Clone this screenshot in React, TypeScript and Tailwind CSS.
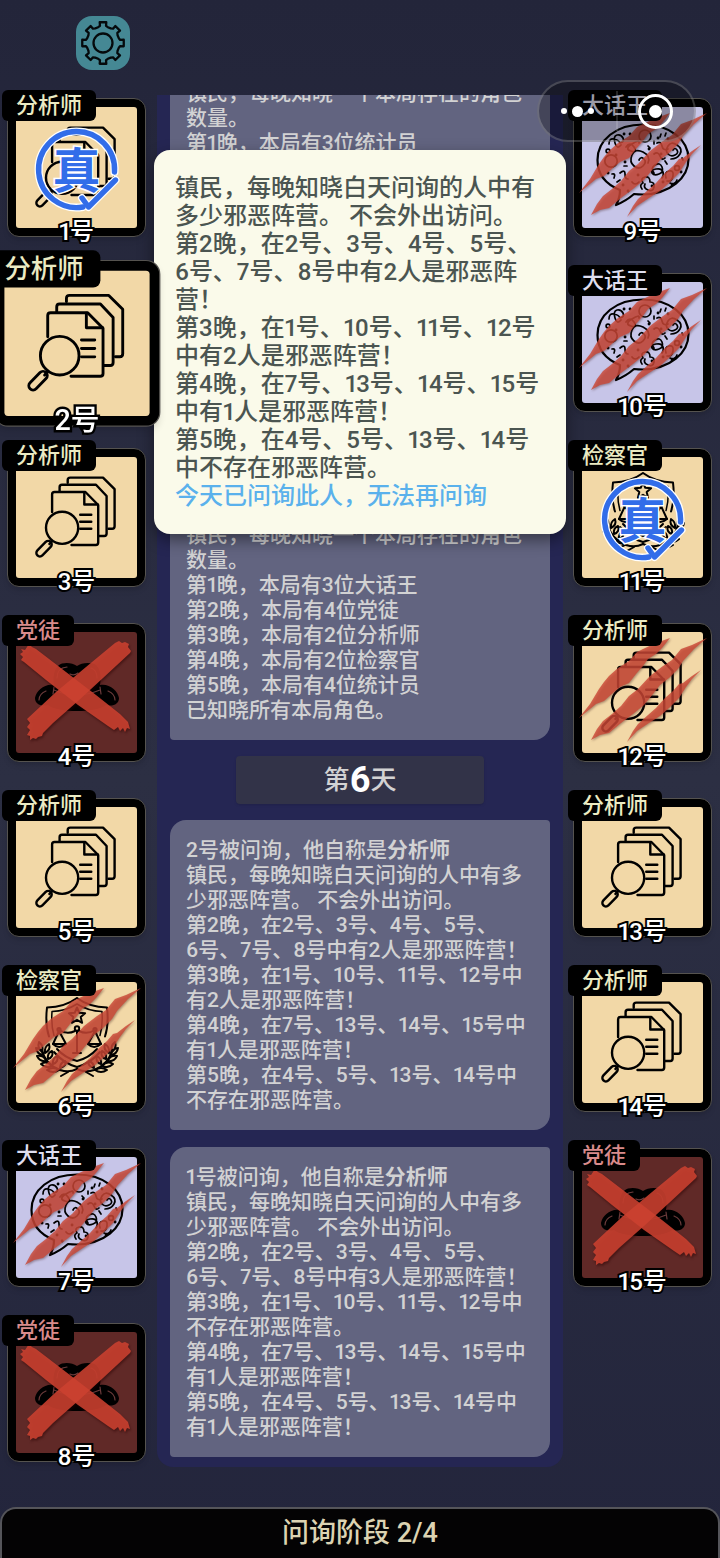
import type { ReactNode } from "react";

type Role = "analyst" | "cultist" | "prosecutor" | "liar";
type Mark = "true" | "claw" | "cross";

interface Player {
  no: number;
  role: Role;
  mark?: Mark;
  selected?: boolean;
}

const ROLES: Record<Role, { name: string; tile: string; text: string }> = {
  analyst: { name: "分析师", tile: "bg-[#f2d8a7]", text: "text-[#ebebc3]" },
  cultist: { name: "党徒", tile: "bg-[#602927]", text: "text-[#d98b8b]" },
  prosecutor: { name: "检察官", tile: "bg-[#f2d8a7]", text: "text-[#ebebc3]" },
  liar: { name: "大话王", tile: "bg-[#c7c5e8]", text: "text-[#dedeef]" },
};

const LEFT: Player[] = [
  { no: 1, role: "analyst", mark: "true" },
  { no: 2, role: "analyst", selected: true },
  { no: 3, role: "analyst" },
  { no: 4, role: "cultist", mark: "cross" },
  { no: 5, role: "analyst" },
  { no: 6, role: "prosecutor", mark: "claw" },
  { no: 7, role: "liar", mark: "claw" },
  { no: 8, role: "cultist", mark: "cross" },
];

const RIGHT: Player[] = [
  { no: 9, role: "liar", mark: "claw" },
  { no: 10, role: "liar", mark: "claw" },
  { no: 11, role: "prosecutor", mark: "true" },
  { no: 12, role: "analyst", mark: "claw" },
  { no: 13, role: "analyst" },
  { no: 14, role: "analyst" },
  { no: 15, role: "cultist", mark: "cross" },
];

function AnalystIcon() {
  return (
    <g fill="none" stroke="#000" strokeWidth="2.4" strokeLinecap="round" strokeLinejoin="round">
      <path d="M51.7 25.8V23q0-2.4 2.6-2.4H87l11.6 11.6v37q0 2.5-2.4 2.5h-3.7" />
      <path d="M43.6 34v-3.8q0-2.4 2.4-2.4h34L90.6 39v37.5q0 2.5-2.4 2.5h-4.9" />
      <path d="M36.1 55V37.4q0-2.4 2.4-2.4h30.9l12.8 13v37.6q0 2.4-2.4 2.4H55.5" />
      <path d="M68.3 35.5v12h13.5" />
      <path d="M64.2 57.8h11.1M64.2 64.8h11.1M64.2 71.8h11.1" />
      <circle cx="46.1" cy="70.8" r="16.1" />
      <path d="M35.5 84.5 33.5 87" />
      <path d="M29.7 84.9 21.4 93.4a3.5 3.5 0 0 0 5 5l8.3-8.5a3.5 3.5 0 0 0-5-5Z" />
    </g>
  );
}

function CultistIcon() {
  return (
    <g>
      <path
        d="M38 53C36 42 40 33 46 31.500 52 30 57 31.500 61 34 65 31.500 70 30 77 31.500 83 33 86 42 84 53 93 51 102 59 103 66 103 72 97 75 90 73 80 81 42 81 32 73 25 75 19 72 19 66 20 59 29 51 38 53Z"
        fill="#000"
      />
      <g fill="none" stroke="#6b3a3a" strokeWidth="1.2" strokeLinecap="round">
        <path d="M23 68q0-6 7-9M99 68q0-6-7-9" />
        <path d="M41 46q0-10 10-11M81 46q0-8-6-10M54 42q4 2 8-1" />
        <path d="M38 58q22 10 46 0M38 55l-1 7M84 55l1 7" />
      </g>
    </g>
  );
}

function Laurel() {
  return (
    <g>
      <path d="M26 68c2 9 8 16 18 20 6 2 11 2 17-1" />
      <path d="M26 70q-5-4-3-10 5 4 3 10ZM27 73q-6-1-7-7 7 1 7 7ZM29 71q-1-6 4-9 2 6-4 9Z" />
      <path d="M30 79q-6 1-9-5 7-1 9 5ZM32 77q-1-6 4-8 2 6-4 8ZM36 84q-6 3-11-2 6-4 11 2ZM37 82q-1-5 4-8 2 6-4 8Z" />
      <path d="M43 88q-6 4-12 0 6-4 12 0ZM44 86q0-5 5-7 2 5-5 7ZM52 90l-7 4" />
    </g>
  );
}

function ProsecutorIcon() {
  return (
    <g fill="none" stroke="#000" strokeWidth="2" strokeLinecap="round" strokeLinejoin="round">
      <path d="M61 16q-12 9-30 9.500q-2 17 2 29M61 16q12 9 30 9.500q2 17-2 29" />
      <path d="M61 22q-11 7-25 7.500q-1 14 2 24M61 22q11 7 25 7.500q1 14-2 24" strokeWidth="1.500" />
      <path d="m61 25.500 2.300 5.300 5.800.5-4.400 3.800 1.400 5.700-5.100-3-5.100 3 1.400-5.700-4.400-3.800 5.800-.5Z" />
      <circle cx="61" cy="46.500" r="2.200" />
      <path d="M61 49v22M57 71h8M59 49q-8 4-16-1M63 49q8 4 16-1" />
      <circle cx="43" cy="47.500" r="1.600" />
      <circle cx="79" cy="47.500" r="1.600" />
      <path d="m43 49-6 13h13l-7-13ZM79 49l-7 13h13l-6-13Z" />
      <path d="M37 62q6 6 13 0M72 62q6 6 13 0M41 67q8 9 20 12 12-3 20-12M38 70q9 11 23 15 14-4 23-15" />
      <Laurel />
      <g transform="matrix(-1 0 0 1 122 0)">
        <Laurel />
      </g>
    </g>
  );
}

function LiarIcon() {
  return (
    <g fill="none" stroke="#000" strokeWidth="1.700" strokeLinecap="round" strokeLinejoin="round">
      <path
        d="M38 83C23 77 15.500 66 15.500 53 15.500 33 34 17.500 61 17.500S106.500 33 106.500 52 88 87 61 87.500q-5 0-9-.5-8 7-18 11 4-7 4-15Z"
        strokeWidth="2.200"
      />
      <path d="M57 53q2-4 5-1t-1 7-9 0-2-11 11-3 5 11" />
      <path d="M91 43q2-3 4 0t-2 5-7-1 0-8 9-1 3 9-9 5" />
      <circle cx="63" cy="29" r="6" />
      <circle cx="29" cy="54" r="6.200" />
      <circle cx="26" cy="44" r="1.900" />
      <circle cx="95" cy="61" r="2.400" />
      <path d="M27 37q0-6 5-5t6 4q5-1 3-5t-6-3-2 8 6 2" />
      <path d="M44 40q4-6 8 0t-3 4 1-7 7-1M38 66q5-4 5 1t3 5M75 36q4-2 5 3t6 3M30 67q4-1 2 4" />
      <path d="M72 66q-4-5 1-8t7 2-3 7-7-1 4-4 7 3-1 6" />
      <path d="M60 82q-3-4 1-6-3-5 2-6t5 5q5 0 4 5t-6 3-3-6" />
      <path d="M84 71q-2-6 3-7t4 5-6 5M88 76q5 2 7-3M50 75q3 4 7 0M72 47q4-3 6 2t5 2" />
      <path d="m79 27-1 3M84 26l-1 3M66 39l2 2M72 34v3M35 75l3-2M42 59h3M100 51l1 2M83 54l2 3" />
      <g strokeWidth="2.800">
        <path d="M48 27h.1M42 27h.1M76 31h.1M34 48h.1M43 55h.1M26 66h.1M41 78h.1M56 68h.1M67 42h.1M79 47h.1M86 32h.1M70 79h.1M81 75h.1M90 78h.1M99 65h.1M46 84h.1" />
      </g>
    </g>
  );
}

const ICONS: Record<Role, () => ReactNode> = {
  analyst: AnalystIcon,
  cultist: CultistIcon,
  prosecutor: ProsecutorIcon,
  liar: LiarIcon,
};

function ClawMark() {
  return (
    <g fill="#cc4736" fillOpacity="0.8" className="drop-shadow-[1px_1px_1px_rgba(60,20,20,0.5)]">
      <path d="M-3 86 8 72 17 57 22 50 27 44 36 36 47 29 55 20 61 17 74 11 88 6 80 16 74 22 66 27 61 34 54 42 47 51 38 55 31 61 22 69 14 72Z" />
      <path d="M9 108 15 97 21 89 30 82 39 74 47 64 56 57 68 44 81 34 90 28 99 17 110 13 125 6 112 17 101 29 96 37 87 46 78 53 71 62 62 73 51 82 39 91 27 101 18 103Z" />
      <path d="M45 110 51 99 56 92 66 83 74 76 83 66 91 59 97 52 101 51 110 44 119 38 110 47 104 55 97 66 87 76 78 84 67 91 55 99Z" />
    </g>
  );
}

function CrossMark() {
  return (
    <g fill="#cc4130" fillOpacity="0.88" className="drop-shadow-[1px_2px_1px_rgba(40,0,0,0.5)]">
      <path d="M99 11 103 9 106 11 109 10 113 12 112 15 115 19 114 21 87 46 62 69 37 91 27 101 26 104 22 105 20 107 17 106 14 108 14 104 11 103 14 98 11 95 14 91 11 87 40 60 70 35Z" />
      <path d="M13 12 16 15 20 17 50 40 80 63 104 82 112 90 114 97 111 96 109 100 107 96 104 99 102 95 98 98 92 94 62 73 30 48 8 30 5 28 7 25 4 22 7 20 5 17 9 18Z" />
    </g>
  );
}

function TrueMark() {
  const ring = "M98.500 65A38 38 0 1 0 67 100";
  const tick = "m66 91 6.500 9L99.500 73";
  return (
    <g fill="none" strokeLinecap="round" strokeLinejoin="round">
      <path d={ring} stroke="#fff" strokeWidth="8" />
      <path d={tick} stroke="#fff" strokeWidth="8" />
      <path d={ring} stroke="#326de9" strokeWidth="5.400" />
      <path d={tick} stroke="#326de9" strokeWidth="5.400" />
    </g>
  );
}

function PlayerCard({ player }: { player: Player }) {
  const role = ROLES[player.role];
  const Icon = ICONS[player.role];
  return (
    <button
      type="button"
      className={`relative block w-36 pt-2 pl-[5px] text-left ${player.selected ? "z-20 scale-120" : ""}`}
    >
      <span className="relative block rounded-xl border border-[#55534f] bg-black p-2 shadow-md">
        <span className={`relative block aspect-square rounded-[3px] ${role.tile}`}>
          <svg viewBox="0 0 121 121" className="block size-full overflow-visible" aria-hidden="true">
            <Icon />
            {player.mark === "claw" && <ClawMark />}
            {player.mark === "cross" && <CrossMark />}
            {player.mark === "true" && <TrueMark />}
          </svg>
          {player.mark === "true" && (
            <span className="absolute inset-0 flex items-center justify-center pt-2 text-5xl leading-none font-bold text-[#326de9] [-webkit-text-stroke:3px_white] [paint-order:stroke_fill]">
              真
            </span>
          )}
        </span>
        <span className="absolute inset-x-0 -bottom-2 text-center text-2xl leading-6 font-medium text-white [-webkit-text-stroke:4px_black] [paint-order:stroke_fill]">
          {player.no}号
        </span>
      </span>
      <span
        className={`absolute top-0 left-0 rounded-md bg-black px-[14px] text-[22px] leading-[31px] font-medium whitespace-nowrap ${role.text}`}
      >
        {role.name}
      </span>
    </button>
  );
}

function LogCard({ lines, className = "" }: { lines: ReactNode[]; className?: string }) {
  return (
    <article
      className={`shrink-0 rounded-tl-2xl rounded-tr-sm rounded-br-2xl rounded-bl-sm bg-[#626480] px-4 pt-[18px] pb-[17px] text-[21px] leading-[25px] whitespace-nowrap text-[#d2d2d3] ${className}`}
    >
      {lines.map((line, i) => (
        <p key={i}>{line}</p>
      ))}
    </article>
  );
}

const RECORDS_A: ReactNode[] = [
  "镇民，每晚知晓一个本局存在的角色",
  "数量。",
  "第1晚，本局有3位统计员",
];

const RECORDS_B: ReactNode[] = [
  "镇民，每晚知晓一个本局存在的角色",
  "数量。",
  "第1晚，本局有3位大话王",
  "第2晚，本局有4位党徒",
  "第3晚，本局有2位分析师",
  "第4晚，本局有2位检察官",
  "第5晚，本局有4位统计员",
  "已知晓所有本局角色。",
];

const RECORDS_C: ReactNode[] = [
  <>2号被问询，他自称是<b>分析师</b></>,
  "镇民，每晚知晓白天问询的人中有多",
  "少邪恶阵营。 不会外出访问。",
  "第2晚，在2号、3号、4号、5号、",
  "6号、7号、8号中有2人是邪恶阵营！",
  "第3晚，在1号、10号、11号、12号中",
  "有2人是邪恶阵营！",
  "第4晚，在7号、13号、14号、15号中",
  "有1人是邪恶阵营！",
  "第5晚，在4号、5号、13号、14号中",
  "不存在邪恶阵营。",
];

const RECORDS_D: ReactNode[] = [
  <>1号被问询，他自称是<b>分析师</b></>,
  "镇民，每晚知晓白天问询的人中有多",
  "少邪恶阵营。 不会外出访问。",
  "第2晚，在2号、3号、4号、5号、",
  "6号、7号、8号中有3人是邪恶阵营！",
  "第3晚，在1号、10号、11号、12号中",
  "不存在邪恶阵营。",
  "第4晚，在7号、13号、14号、15号中",
  "有1人是邪恶阵营！",
  "第5晚，在4号、5号、13号、14号中",
  "有1人是邪恶阵营！",
];

const TOOLTIP = [
  "镇民，每晚知晓白天问询的人中有",
  "多少邪恶阵营。 不会外出访问。",
  "第2晚，在2号、3号、4号、5号、",
  "6号、7号、8号中有2人是邪恶阵",
  "营！",
  "第3晚，在1号、10号、11号、12号",
  "中有2人是邪恶阵营！",
  "第4晚，在7号、13号、14号、15号",
  "中有1人是邪恶阵营！",
  "第5晚，在4号、5号、13号、14号",
  "中不存在邪恶阵营。",
];

const GEAR = Array.from({ length: 8 }, (_, k) =>
  [
    [-17, 16.5],
    [-10, 17.5],
    [-9, 21],
    [9, 21],
    [10, 17.5],
    [17, 16.5],
  ]
    .map(([offset, radius]) => {
      const a = ((k * 45 + offset) * Math.PI) / 180;
      return `${(22 + radius * Math.cos(a)).toFixed(2)},${(22 + radius * Math.sin(a)).toFixed(2)}`;
    })
    .join(" "),
).join(" ");

export default function App() {
  return (
    <div className="relative flex min-h-screen flex-col overflow-hidden bg-linear-to-b from-[#23253a] via-[#2c2f43] to-[#23253c] font-['Roboto','Noto_Sans_CJK_SC',sans-serif] font-medium proportional-nums">
      <header className="h-[90px] pt-4 pl-[76px]">
        <button
          type="button"
          aria-label="设置"
          className="flex size-[54px] items-center justify-center rounded-2xl bg-[#458894]"
        >
          <svg viewBox="0 0 44 44" className="size-11" fill="none" stroke="#050a0c" strokeWidth="2.3" strokeLinejoin="round">
            <polygon points={GEAR} />
            <circle cx="22" cy="22" r="9.500" />
          </svg>
        </button>
      </header>

      <main className="flex pr-2 pl-0.5">
        <div className="flex shrink-0 flex-col gap-7 pb-[5px]">
          {LEFT.map((p) => (
            <PlayerCard key={p.no} player={p} />
          ))}
        </div>

        <section className="relative mt-[5px] mr-[5px] ml-[11px] flex min-w-0 flex-1 flex-col">
          <div className="flex flex-1 flex-col justify-end overflow-hidden rounded-b-2xl bg-[#252653] px-[13px] pb-[10px] contain-size">
            <LogCard lines={RECORDS_A} className="mb-[17px] min-h-[425px]" />
            <LogCard lines={RECORDS_B} />
            <h2 className="my-4 flex h-12 w-[248px] shrink-0 items-center justify-center self-center rounded bg-[#323348] text-[26px] leading-none text-[#d2d2d3] shadow-sm">
              第<b className="text-4xl leading-none text-white">6</b>天
            </h2>
            <LogCard lines={RECORDS_C} className="mb-[17px]" />
            <LogCard lines={RECORDS_D} />
          </div>

          <div
            role="tooltip"
            className="absolute -inset-x-[3px] top-[55px] z-10 rounded-2xl bg-[#fafaea] px-[21px] py-6 text-2xl leading-7 whitespace-nowrap text-[#4b5551] shadow-[0_6px_16px_rgba(0,0,0,0.45)]"
          >
            {TOOLTIP.map((line) => (
              <p key={line}>{line}</p>
            ))}
            <p className="text-[#5ab1ec]">今天已问询此人，无法再问询</p>
          </div>
        </section>

        <div className="flex shrink-0 flex-col gap-7 pb-[5px]">
          {RIGHT.map((p) => (
            <PlayerCard key={p.no} player={p} />
          ))}
        </div>
      </main>

      <footer className="mt-10 flex flex-1 items-center justify-center rounded-t-2xl border-2 border-b-0 border-[#55555a] bg-[#040304] text-[27px] leading-[49px] text-[#dcd3b2]">
        问询阶段 2/4
      </footer>

      <div className="absolute top-20 right-6 z-30 flex h-[62px] w-[159px] items-center rounded-full border-2 border-white/20 bg-black/30">
        <button type="button" aria-label="更多" className="flex h-full flex-1 items-center justify-center gap-[5px]">
          <span className="size-1.5 rounded-full bg-white" />
          <span className="size-[11px] rounded-full bg-white" />
          <span className="size-1.5 rounded-full bg-white" />
        </button>
        <span className="h-10 w-0.5 bg-white/15" />
        <button type="button" aria-label="关闭" className="flex h-full flex-1 items-center justify-center">
          <span className="flex size-[35px] items-center justify-center rounded-full border-[3px] border-white">
            <span className="size-[13px] rounded-full bg-white" />
          </span>
        </button>
      </div>
    </div>
  );
}
